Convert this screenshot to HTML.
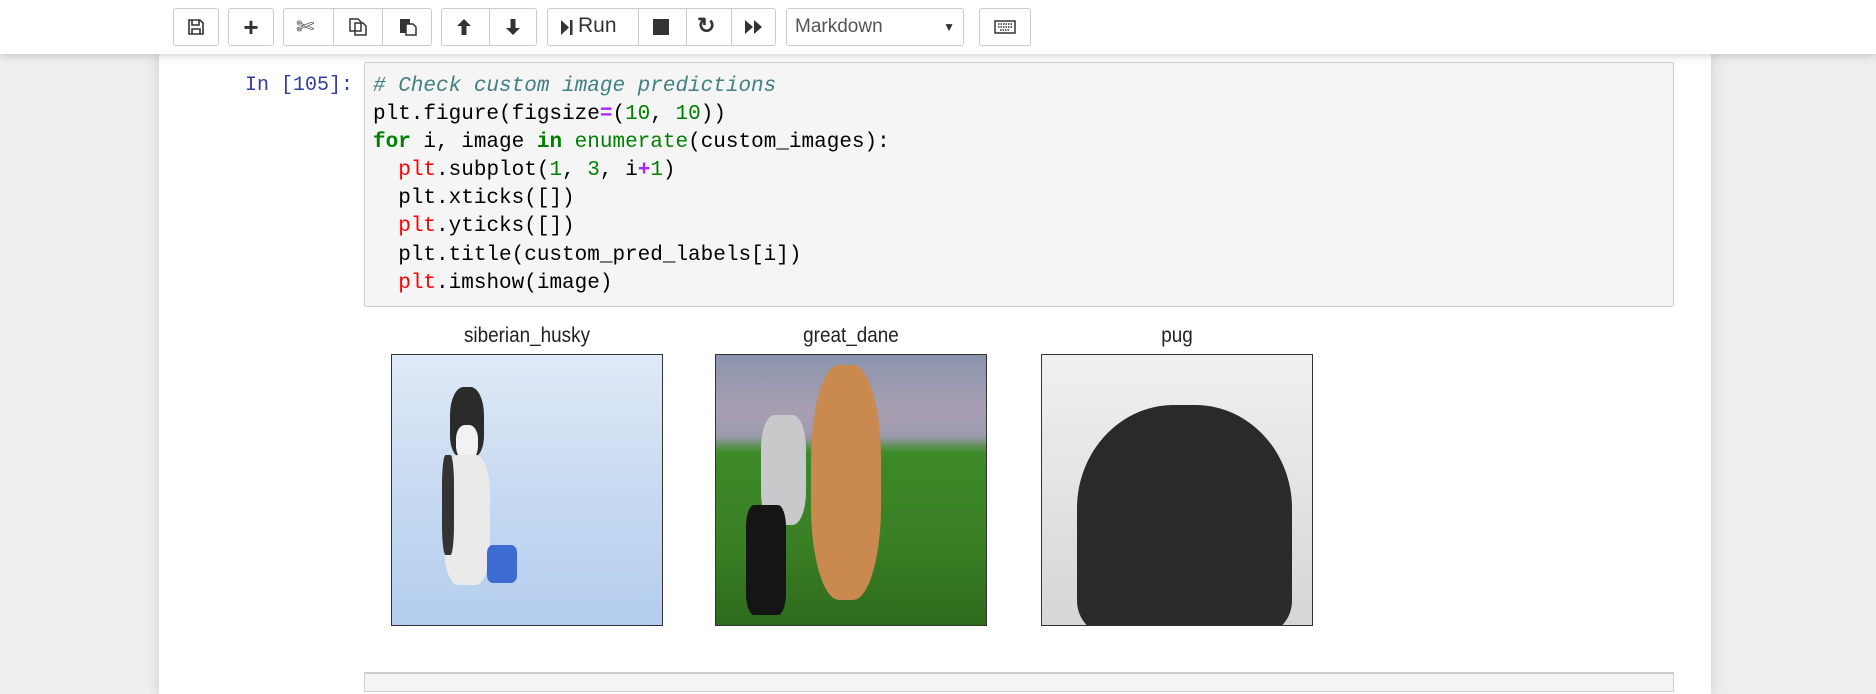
<!DOCTYPE html>
<html><head><meta charset="utf-8"><style>
*{box-sizing:border-box;margin:0;padding:0}
body{width:1876px;height:684px;overflow:hidden;background:#eeeeee;font-family:"Liberation Sans",sans-serif;position:relative}
#tb{position:absolute;left:0;top:0;width:1876px;height:54px;background:#fff;box-shadow:0 0 10px rgba(0,0,0,.25);z-index:2}
.b{position:absolute;top:8px;height:38px;border:1px solid #ccc;border-radius:3px;background:#fff;display:flex;align-items:center;justify-content:center;color:#333;font-size:19px}
.sep{position:absolute;top:8px;width:1px;height:38px;background:#ccc}
#nb{position:absolute;left:159px;top:54px;width:1552px;height:640px;background:#fff;box-shadow:0 0 12px rgba(0,0,0,.15)}
.prompt{position:absolute;left:200px;width:153px;top:72px;text-align:right;color:#303f9f;font-family:"Liberation Mono",monospace;font-size:20px;line-height:28px}
#code{position:absolute;left:364px;top:62px;width:1310px;height:245px;background:#f5f5f5;border:1px solid #cfcfcf;border-radius:2px;padding:10px 8px 0;font-family:"Liberation Mono",monospace;font-size:21px;line-height:28.1px;color:#000;white-space:pre}
.c{color:#408080;font-style:italic}.k{color:#008000;font-weight:bold}.n{color:#008000}.o{color:#aa22ff;font-weight:bold}.r{color:#ff0000}
.t{position:absolute;top:324px;width:272px;text-align:center;font-size:21px;color:#222;transform:scaleX(.9)}
.img{position:absolute;top:354px;width:272px;height:272px;border:1.5px solid #333;overflow:hidden}
#next{position:absolute;left:364px;top:672px;width:1310px;height:20px;background:#f5f5f5;border:1px solid #cfcfcf;border-top:2px solid #ccc}
</style></head><body>
<div id="tb">
<div class="b" style="left:173px;width:46px"><svg width="18" height="18" viewBox="0 0 18 18"><path d="M2 2h11l3 3v11H2z M5 2v5h7V2 M5 16v-5h8v5" fill="none" stroke="#333" stroke-width="1.6"/></svg></div>
<div class="b" style="left:228px;width:46px;font-size:26px;font-weight:bold">+</div>
<div class="b" style="left:283px;width:149px"></div>
<div class="sep" style="left:333px"></div><div class="sep" style="left:382px"></div>
<div style="position:absolute;left:296px;top:14px;font-size:22px;color:#444">✄</div>
<svg style="position:absolute;left:348px;top:17px" width="20" height="20" viewBox="0 0 20 20"><path d="M2 2h8l3 3v9H2z M7 6h8l3 3v9H7z" fill="#fff" stroke="#333" stroke-width="1.5"/></svg>
<svg style="position:absolute;left:398px;top:17px" width="20" height="20" viewBox="0 0 20 20"><rect x="2" y="2" width="10" height="14" fill="#333"/><path d="M8 7h7l3 3v8H8z" fill="#fff" stroke="#333" stroke-width="1.5"/></svg>
<div class="b" style="left:441px;width:96px"></div><div class="sep" style="left:489px"></div>
<svg style="position:absolute;left:455px;top:17px" width="18" height="20" viewBox="0 0 18 20"><path d="M9 2L2 9h4.5v9h5V9H16z" fill="#333"/></svg>
<svg style="position:absolute;left:504px;top:17px" width="18" height="20" viewBox="0 0 18 20"><path d="M9 18L2 11h4.5V2h5v9H16z" fill="#333"/></svg>
<div class="b" style="left:547px;width:229px"></div>
<div class="sep" style="left:638px"></div><div class="sep" style="left:686px"></div><div class="sep" style="left:731px"></div>
<svg style="position:absolute;left:560px;top:19px" width="14" height="17" viewBox="0 0 14 17"><path d="M1 1l8 7.5L1 16z" fill="#333"/><rect x="10" y="1" width="2.5" height="15" fill="#333"/></svg>
<div style="position:absolute;left:578px;top:14px;font-size:21px;color:#333">Run</div>
<div style="position:absolute;left:653px;top:19px;width:16px;height:16px;background:#333"></div>
<div style="position:absolute;left:697px;top:13px;font-size:22px;font-weight:bold;color:#333">↻</div>
<svg style="position:absolute;left:744px;top:19px" width="20" height="16" viewBox="0 0 20 16"><path d="M1 1l8 7-8 7z M10 1l8 7-8 7z" fill="#333"/></svg>
<div class="b" style="left:786px;width:178px;justify-content:space-between;padding:0 8px;font-size:19px;color:#555"><span>Markdown</span><span style="font-size:12px;color:#333">▼</span></div>
<div class="b" style="left:979px;width:52px"><svg width="22" height="14" viewBox="0 0 22 14"><rect x="1" y="1" width="20" height="12" fill="none" stroke="#333" stroke-width="1.5"/><path d="M4 4h14M4 7h14M6 10h10" stroke="#333" stroke-width="1.5" stroke-dasharray="1.5 1"/></svg></div>
</div>
<div id="nb"></div>
<div class="prompt">In [105]:</div>
<div id="code"><span class="c"># Check custom image predictions</span>
plt.figure(figsize<span class="o">=</span>(<span class="n">10</span>, <span class="n">10</span>))
<span class="k">for</span> i, image <span class="k">in</span> <span class="n">enumerate</span>(custom_images):
  <span class="r">plt</span>.subplot(<span class="n">1</span>, <span class="n">3</span>, i<span class="o">+</span><span class="n">1</span>)
  plt.xticks([])
  <span class="r">plt</span>.yticks([])
  plt.title(custom_pred_labels[i])
  <span class="r">plt</span>.imshow(image)</div>
<div class="t" style="left:391px">siberian_husky</div>
<div class="t" style="left:715px">great_dane</div>
<div class="t" style="left:1041px">pug</div>
<div class="img" style="left:391px;background:linear-gradient(#dfe9f6,#c7daf1 50%,#b4cdee)">
<div style="position:absolute;left:58px;top:32px;width:34px;height:70px;background:#2b2b2b;border-radius:40% 40% 30% 30%"></div>
<div style="position:absolute;left:64px;top:70px;width:22px;height:35px;background:#f2f2f2;border-radius:40%"></div>
<div style="position:absolute;left:52px;top:100px;width:46px;height:130px;background:#eaeaea;border-radius:30%"></div>
<div style="position:absolute;left:50px;top:100px;width:12px;height:100px;background:#333;border-radius:30%"></div>
<div style="position:absolute;left:95px;top:190px;width:30px;height:38px;background:#3d6bd0;border-radius:20%"></div></div>
<div class="img" style="left:715px;background:linear-gradient(#8a94ad 0%,#a89eb2 20%,#9d9bae 30%,#3d8a2a 36%,#3a7f24 70%,#2e6b1c)">
<div style="position:absolute;left:45px;top:60px;width:45px;height:110px;background:#c9c9cc;border-radius:30%"></div>
<div style="position:absolute;left:30px;top:150px;width:40px;height:110px;background:#151515;border-radius:20%"></div>
<div style="position:absolute;left:95px;top:10px;width:70px;height:235px;background:#c9894f;border-radius:40%"></div></div>
<div class="img" style="left:1041px;background:linear-gradient(#f0f0f0,#d6d6d6)">
<div style="position:absolute;left:35px;top:50px;width:215px;height:230px;background:#2a2a2a;border-radius:45% 45% 15% 15%"></div></div>
<div id="next"></div>
</body></html>
